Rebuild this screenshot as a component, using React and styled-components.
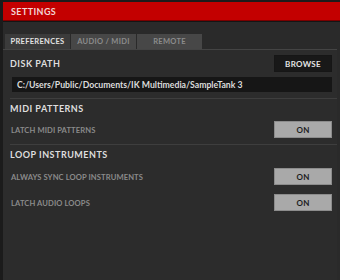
import React from 'react';
import styled, { createGlobalStyle } from 'styled-components';

const GlobalStyle = createGlobalStyle`
  body {
    margin: 0;
    background: #1b1b1b;
    font-family: Lato, "Liberation Sans", sans-serif;
  }
`;

const Window = styled.div`
  width: 340px;
  height: 280px;
  display: flex;
  flex-direction: column;
  background: #1b1b1b;
  padding: 2px 0 0 3px;
  box-sizing: border-box;
  overflow: hidden;
`;

const Header = styled.div`
  height: 18px;
  flex-shrink: 0;
  display: flex;
  align-items: center;
  padding-left: 8px;
  background: #c30000;
  border-bottom: 1px solid #7a0000;
  color: #f2d4d4;
  font-size: 9px;
  font-weight: bold;
  letter-spacing: 0.4px;
`;

const Body = styled.div`
  flex: 1;
  display: flex;
  flex-direction: column;
  background: #2a2a2a;
  border-top: 1px solid #151515;
`;

const TabBar = styled.div`
  display: flex;
  gap: 1px;
  padding: 12px 0 0 2px;
`;

const Tab = styled.div`
  width: 65px;
  height: 15px;
  display: flex;
  align-items: center;
  justify-content: center;
  background: ${p => (p.active ? '#3b3b3b' : '#474747')};
  color: ${p => (p.active ? '#e2e2e2' : '#8c8c8c')};
  font-size: 7.5px;
  font-weight: bold;
  letter-spacing: 0.3px;
`;

const Panel = styled.div`
  flex: 1;
  margin-right: 3px;
  background: #2c2c2c;
  border-top: 1px solid #444;
  padding: 5px 5px 0 7px;
  display: flex;
  flex-direction: column;
`;

const Row = styled.div`
  display: flex;
  align-items: center;
  justify-content: space-between;
  height: 17px;
  margin-top: ${p => p.top || 0}px;
`;

const Heading = styled.div`
  color: #dedede;
  font-size: 9px;
  font-weight: bold;
  letter-spacing: 0.5px;
  margin-top: ${p => p.top || 0}px;
  line-height: 12px;
`;

const Label = styled.div`
  color: #8a8a8a;
  font-size: 7.6px;
  font-weight: bold;
  letter-spacing: 0.1px;
  padding-left: 1px;
`;

const Button = styled.div`
  width: 58px;
  height: 17px;
  box-sizing: border-box;
  display: flex;
  align-items: center;
  justify-content: center;
  font-size: 8px;
  font-weight: bold;
  letter-spacing: 0.3px;
  background: ${p => (p.dark ? '#181818' : '#a9a9a9')};
  color: ${p => (p.dark ? '#e4e4e4' : '#1d1d1d')};
  border: 1px solid ${p => (p.dark ? '#161616' : '#8c8c8c')};
`;

const PathField = styled.div`
  height: 15px;
  margin: 5px 0 0 2px;
  background: #161616;
  color: #dcdcdc;
  font-size: 8.7px;
  font-weight: bold;
  display: flex;
  align-items: center;
  padding-left: 5px;
`;

const Divider = styled.div`
  height: 1px;
  background: #3e3e3e;
  margin: ${p => p.top}px -5px 0 0;
`;

export default function App() {
  return (
    <>
      <GlobalStyle />
      <Window>
        <Header>SETTINGS</Header>
        <Body>
          <TabBar>
            <Tab active>PREFERENCES</Tab>
            <Tab>AUDIO / MIDI</Tab>
            <Tab>REMOTE</Tab>
          </TabBar>
          <Panel>
            <Row>
              <Heading>DISK PATH</Heading>
              <Button dark>BROWSE</Button>
            </Row>
            <PathField>C:/Users/Public/Documents/IK Multimedia/SampleTank 3</PathField>
            <Divider top={6} />
            <Heading top={4}>MIDI PATTERNS</Heading>
            <Row top={6}>
              <Label>LATCH MIDI PATTERNS</Label>
              <Button>ON</Button>
            </Row>
            <Divider top={6} />
            <Heading top={4}>LOOP INSTRUMENTS</Heading>
            <Row top={7}>
              <Label>ALWAYS SYNC LOOP INSTRUMENTS</Label>
              <Button>ON</Button>
            </Row>
            <Row top={9}>
              <Label>LATCH AUDIO LOOPS</Label>
              <Button>ON</Button>
            </Row>
          </Panel>
        </Body>
      </Window>
    </>
  );
}
